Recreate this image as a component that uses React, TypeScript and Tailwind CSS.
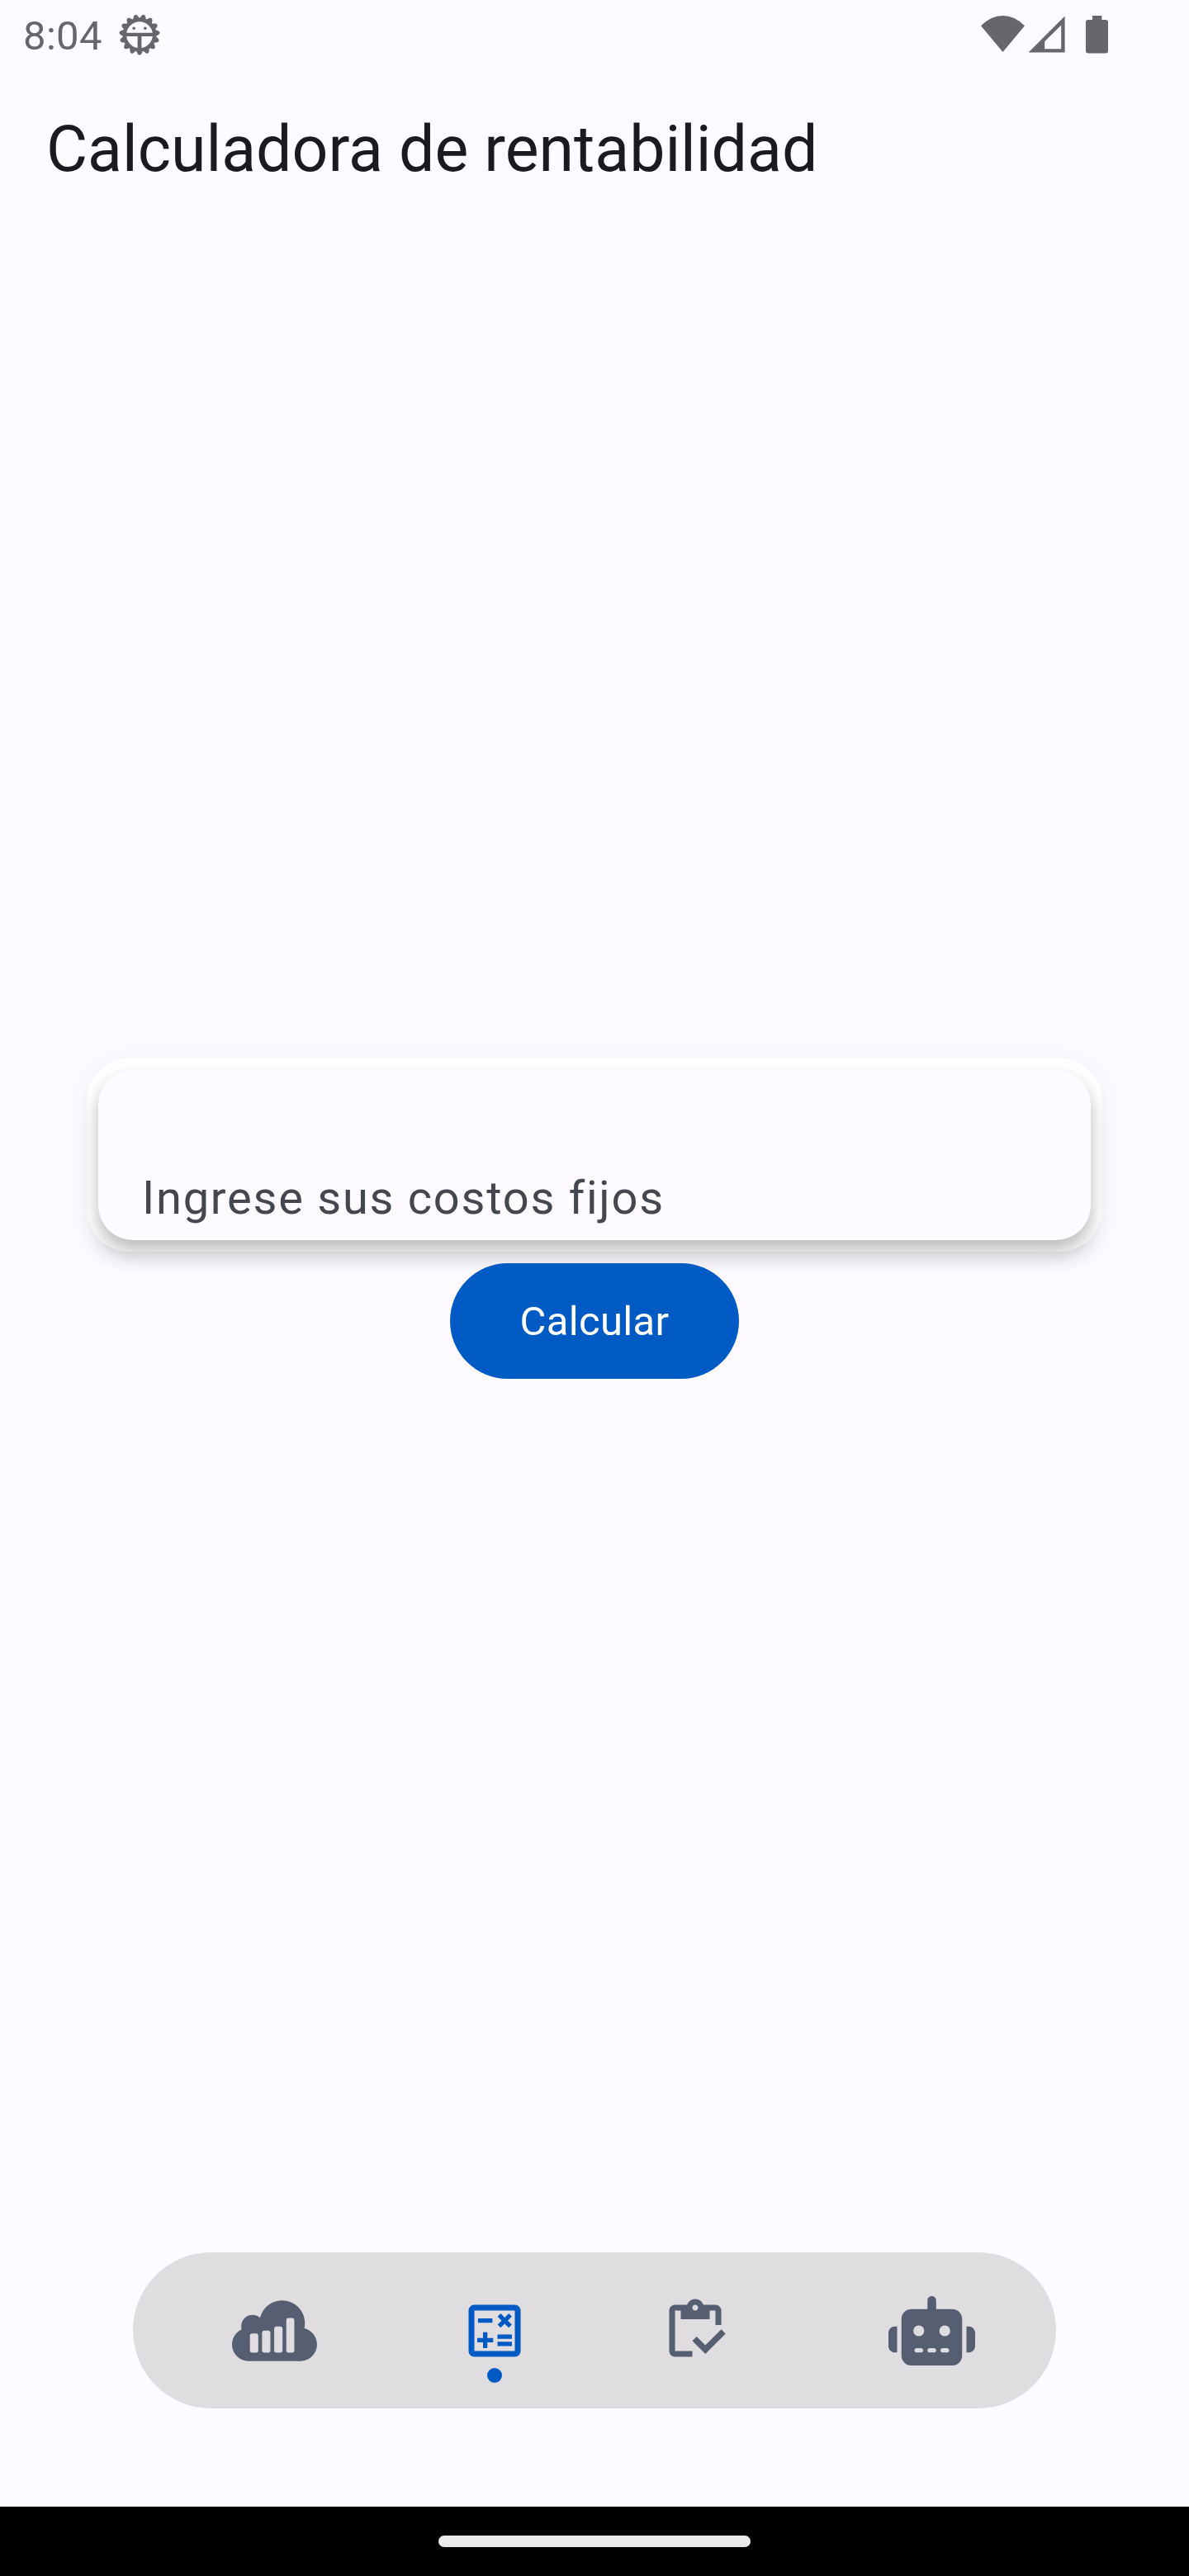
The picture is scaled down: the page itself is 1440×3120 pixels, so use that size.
import type { ReactNode } from "react";
import { FaRobot, FaSellsy } from "react-icons/fa6";
import { MdOutlineCalculate } from "react-icons/md";

const TEETH = Array.from({ length: 15 }, (_, i) => i * 24);

function BugIcon() {
  return (
    <svg className="h-[50px] w-[50px]" viewBox="-25 -25 50 50" fill="#68666a">
      {TEETH.map((a) => (
        <path key={a} transform={`rotate(${a})`} d="M-4.300 19 -2.200 23.300Q0 26 2.200 23.300L4.300 19Z" />
      ))}
      <circle r="20.4" />
      <path fill="#fdfbff" d="M-15.8 -2.2A16 16 0 0 1 15.8 -2.2ZM-15.8 2H-2.4V16A16 16 0 0 1 -15.8 2ZM15.8 2H2.4V16A16 16 0 0 0 15.8 2Z" />
      <circle cx="-6.8" cy="-7.8" r="1.8" />
      <circle cx="6.8" cy="-7.8" r="1.8" />
    </svg>
  );
}

function ClipboardCheckIcon() {
  return (
    <svg className="h-[84px] w-[84px]" viewBox="0 0 24 24" fill="currentColor">
      <path d="M5 5h2v3h10V5h2v5h2V5c0-1.1-.9-2-2-2h-4.18C14.4 1.84 13.3 1 12 1s-2.4.84-2.82 2H5c-1.1 0-2 .9-2 2v14c0 1.1.9 2 2 2h6v-2H5V5zm7-2c.55 0 1 .45 1 1s-.45 1-1 1-1-.45-1-1 .45-1 1-1z" />
      <path d="M21 11.5 15.51 17l-3.01-3-1.5 1.5 4.51 4.5 6.99-7z" />
    </svg>
  );
}

function NavItem({ children, active = false }: { children: ReactNode; active?: boolean }) {
  return (
    <button className={active ? "relative block text-[#005ac4]" : "relative block text-[#565e71]"}>
      {children}
      {active && (
        <span className="absolute top-[87px] left-[33px] h-[18px] w-[18px] rounded-full bg-[#005ac4]" />
      )}
    </button>
  );
}

export default function App() {
  return (
    <div className="flex h-[3120px] w-[1440px] flex-col bg-[#fdfbff] font-[Roboto,sans-serif]">
      <header className="flex h-[84px] items-start justify-between pr-[98px] pl-[28px] text-[#68666a]">
        <div className="flex">
          <span className="mt-[15px] w-[116px] text-[49px] leading-[58px] tracking-[0.35px]">8:04</span>
          <div className="mt-[17px]">
            <BugIcon />
          </div>
        </div>
        <svg className="mt-[16px] h-[52px] w-[156px]" viewBox="1186 16 156 52" fill="#68666a">
          <path d="M1188 31.3Q1200 19 1214.5 19T1241 31.3L1214.5 63Z" />
          <path fillRule="evenodd" d="M1289.6 19.6V63.4H1245.6ZM1285.2 30.5 1265.2 50.3V59.2H1285.2Z" />
          <path d="M1323 19h11.3v5h4.7a3 3 0 0 1 3 3v34.500a3 3 0 0 1-3 3h-21a3 3 0 0 1-3-3V27a3 3 0 0 1 3-3h5Z" />
        </svg>
      </header>

      <h1 className="mt-[48px] ml-[56px] text-[77px] leading-[98px] text-[#1b1b1f]">
        Calculadora de rentabilidad
      </h1>

      <main className="flex flex-1 flex-col items-center">
        <div className="mt-[1052px] h-[234px] w-[1230px] overflow-hidden rounded-[52px] bg-white p-[14px] shadow-[0_18px_22px_-12px_rgba(0,0,0,0.19),0_4px_48px_rgba(0,0,0,0.05)]">
          <div className="h-[206px] rounded-[42px] bg-[#fdfbff] pt-[122px] pl-[53px] text-[56px] leading-[66px] tracking-[1.75px] text-[#44474f] shadow-[0_12px_22px_rgba(0,0,0,0.28)]">
            Ingrese sus costos fijos
          </div>
        </div>
        <button className="z-10 mt-[14px] flex h-[140px] w-[350px] items-center justify-center rounded-full bg-[#005ac4] pt-[2px] text-[49px] tracking-[0.35px] text-white">
          Calcular
        </button>
      </main>

      <nav className="mb-[119px] ml-[161px] flex h-[189px] w-[1118px] items-center rounded-full bg-[#dfdde0] pl-[119px]">
        <NavItem>
          <FaSellsy className="h-[84px] w-[105px]" />
        </NavItem>
        <div className="ml-[171.5px]">
          <NavItem active>
            <MdOutlineCalculate className="h-[84px] w-[84px]" />
          </NavItem>
        </div>
        <div className="ml-[159px]">
          <NavItem>
            <ClipboardCheckIcon />
          </NavItem>
        </div>
        <div className="ml-[192.5px]">
          <NavItem>
            <FaRobot className="h-[84px] w-[105px]" />
          </NavItem>
        </div>
      </nav>

      <footer className="flex h-[84px] items-center justify-center bg-black">
        <div className="h-[14px] w-[378px] rounded-full bg-[#eaeaea]" />
      </footer>
    </div>
  );
}
